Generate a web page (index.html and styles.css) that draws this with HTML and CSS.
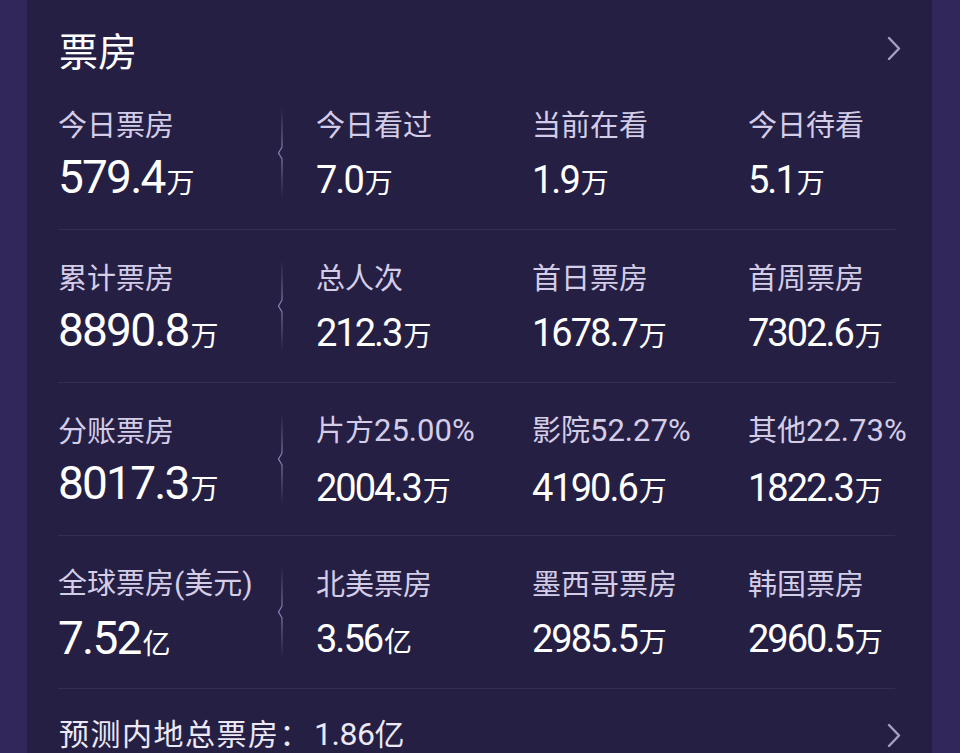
FILE: index.html
```html
<!DOCTYPE html>
<html lang="zh-CN">
<head>
<meta charset="utf-8">
<title>票房</title>
<link rel="stylesheet" href="styles.css">
</head>
<body>
<div class="page">
  <section class="card">
    <header class="card-head">
      <h2 class="card-title">票房</h2>
      <svg class="chev" width="16" height="24" viewBox="0 0 16 24"><polyline points="3,2 13,12.5 3,23" /></svg>
    </header>

    <div class="row">
      <div class="cell"><div class="label">今日票房</div><div class="value"><span class="num">579.4</span><span class="unit">万</span></div></div>
      <div class="sep"><svg width="10" height="92" viewBox="0 0 10 92"><defs><linearGradient id="g1" x1="0" y1="0" x2="0" y2="1"><stop offset="0" stop-color="#9a90c4" stop-opacity="0"/><stop offset="0.5" stop-color="#a198cc" stop-opacity="0.85"/><stop offset="1" stop-color="#9a90c4" stop-opacity="0"/></linearGradient></defs><path d="M6 0 V40 L2.5 46 L6 52 V92" stroke="url(#g1)" /></svg></div>
      <div class="cell"><div class="label">今日看过</div><div class="value"><span class="num sm">7.0</span><span class="unit">万</span></div></div>
      <div class="cell"><div class="label">当前在看</div><div class="value"><span class="num sm">1.9</span><span class="unit">万</span></div></div>
      <div class="cell"><div class="label">今日待看</div><div class="value"><span class="num sm">5.1</span><span class="unit">万</span></div></div>
    </div>

    <div class="row">
      <div class="cell"><div class="label">累计票房</div><div class="value"><span class="num">8890.8</span><span class="unit">万</span></div></div>
      <div class="sep"><svg width="10" height="92" viewBox="0 0 10 92"><path d="M6 0 V40 L2.5 46 L6 52 V92" stroke="url(#g1)" /></svg></div>
      <div class="cell"><div class="label">总人次</div><div class="value"><span class="num sm">212.3</span><span class="unit">万</span></div></div>
      <div class="cell"><div class="label">首日票房</div><div class="value"><span class="num sm">1678.7</span><span class="unit">万</span></div></div>
      <div class="cell"><div class="label">首周票房</div><div class="value"><span class="num sm">7302.6</span><span class="unit">万</span></div></div>
    </div>

    <div class="row">
      <div class="cell"><div class="label">分账票房</div><div class="value"><span class="num">8017.3</span><span class="unit">万</span></div></div>
      <div class="sep"><svg width="10" height="92" viewBox="0 0 10 92"><path d="M6 0 V40 L2.5 46 L6 52 V92" stroke="url(#g1)" /></svg></div>
      <div class="cell"><div class="label">片方<span class="lnum">25.00%</span></div><div class="value"><span class="num sm">2004.3</span><span class="unit">万</span></div></div>
      <div class="cell"><div class="label">影院<span class="lnum">52.27%</span></div><div class="value"><span class="num sm">4190.6</span><span class="unit">万</span></div></div>
      <div class="cell"><div class="label">其他<span class="lnum">22.73%</span></div><div class="value"><span class="num sm">1822.3</span><span class="unit">万</span></div></div>
    </div>

    <div class="row">
      <div class="cell"><div class="label">全球票房<span class="paren">(</span>美元<span class="paren">)</span></div><div class="value"><span class="num">7.52</span><span class="unit">亿</span></div></div>
      <div class="sep"><svg width="10" height="92" viewBox="0 0 10 92"><path d="M6 0 V40 L2.5 46 L6 52 V92" stroke="url(#g1)" /></svg></div>
      <div class="cell"><div class="label">北美票房</div><div class="value"><span class="num sm">3.56</span><span class="unit">亿</span></div></div>
      <div class="cell"><div class="label">墨西哥票房</div><div class="value"><span class="num sm">2985.5</span><span class="unit">万</span></div></div>
      <div class="cell"><div class="label">韩国票房</div><div class="value"><span class="num sm">2960.5</span><span class="unit">万</span></div></div>
    </div>

    <footer class="forecast">
      <div class="forecast-text">预测内地总票房：<span class="fnum">1.86</span>亿</div>
      <svg class="chev" width="16" height="24" viewBox="0 0 16 24"><polyline points="3,2 13,12.5 3,23" /></svg>
    </footer>
  </section>
</div>
</body>
</html>
```

FILE: styles.css
```css
html, body {
  margin: 0;
  padding: 0;
}

body {
  background: #31275a;
  height: 753px;
  overflow: hidden;
  font-family: "Noto Sans CJK SC", "Noto Sans", sans-serif;
  color: #ffffff;
}

.page {
  padding-left: 27px;
}

.card {
  width: 905px;
  min-height: 900px;
  box-sizing: border-box;
  background: #261f44;
  padding: 0 25px 0 26px;
}

.card-head {
  height: 77px;
  box-sizing: border-box;
  padding: 30px 5px 0 6px;
  display: flex;
  justify-content: space-between;
  align-items: flex-start;
}

.card-title {
  margin: 0;
  font-size: 39px;
  line-height: 39px;
  font-weight: 400;
  color: #ffffff;
}

.chev {
  margin-top: 6px;
  display: block;
}

.chev polyline {
  fill: none;
  stroke: #a69ec6;
  stroke-width: 2.4;
  stroke-linecap: round;
  stroke-linejoin: round;
}

.row {
  margin: 0 12px 0 5px;
  height: 153px;
  box-sizing: border-box;
  border-bottom: 1px solid #352d57;
  display: grid;
  grid-template-columns: 218px 40px 216px 216px 1fr;
  align-items: center;
}

.cell {
  white-space: nowrap;
}

.sep svg {
  display: block;
  fill: none;
  stroke-width: 1.2;
}

.label {
  font-size: 29px;
  line-height: 34px;
  color: #d4cde7;
}

.lnum {
  font-family: Roboto, sans-serif;
  font-size: 31px;
}

.paren {
  font-family: Roboto, sans-serif;
  font-size: 30px;
}

.value {
  margin-top: 14px;
  font-family: Roboto, sans-serif;
  font-size: 46px;
  line-height: 46px;
  font-weight: 400;
  color: #ffffff;
}

.num {
  line-height: 1;
  letter-spacing: -1.8px;
}

.num.sm {
  font-size: 38px;
  letter-spacing: -2px;
}

.unit {
  font-family: "Noto Sans CJK SC", sans-serif;
  font-size: 28px;
  line-height: 1;
  font-weight: 400;
  margin-left: 2px;
}

.forecast {
  padding: 23px 5px 0 6px;
  display: flex;
  justify-content: space-between;
  align-items: flex-start;
}

.forecast-text {
  font-size: 30px;
  line-height: 40px;
  letter-spacing: 1.5px;
  color: #ece8f4;
}

.fnum {
  font-family: Roboto, sans-serif;
  font-size: 32px;
  font-weight: 400;
  letter-spacing: -0.5px;
  margin-left: 3px;
}

.forecast .chev {
  margin-top: 11px;
}
```
